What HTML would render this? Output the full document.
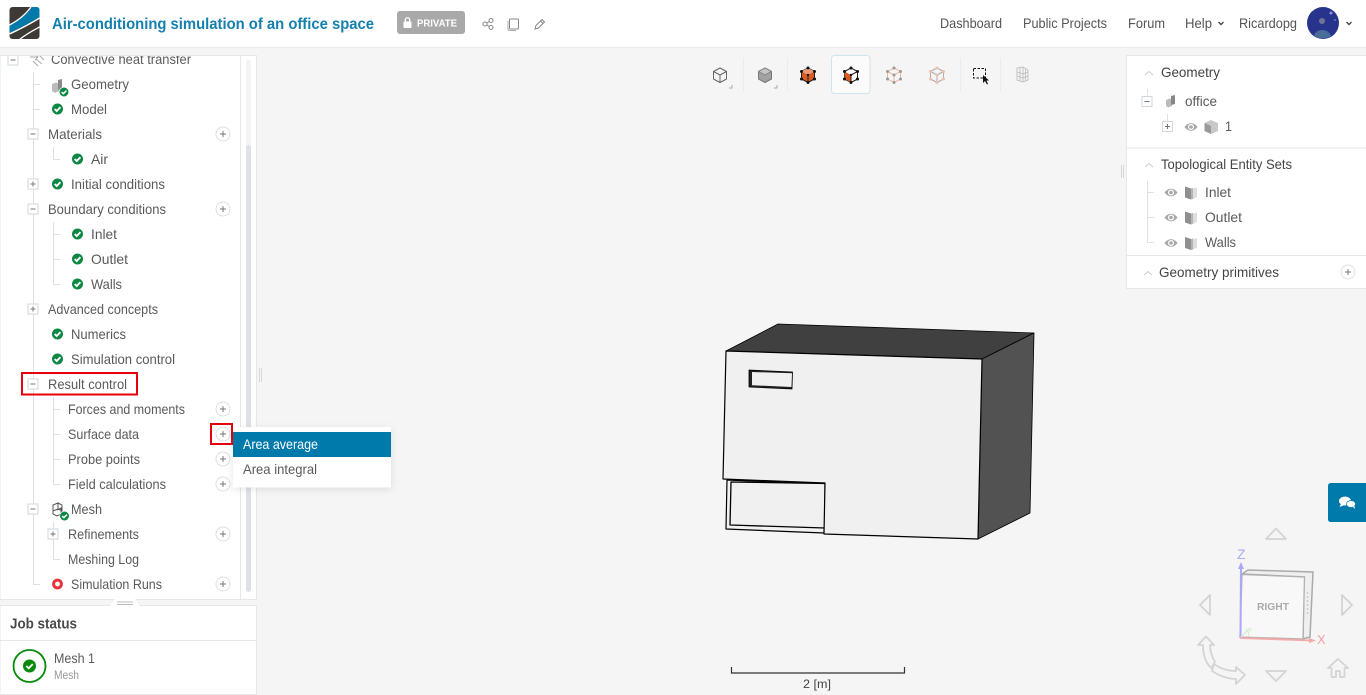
<!DOCTYPE html>
<html lang="en">
<head>
<meta charset="utf-8">
<title>Air-conditioning simulation of an office space</title>
<style>
html,body{margin:0;padding:0;width:1366px;height:695px;overflow:hidden;background:#f5f5f5}
svg{display:block;font-family:"Liberation Sans",sans-serif}
.t{font-size:14px;fill:#5a5a5a}
.n{font-size:14px;fill:#555}
.l{stroke:#e0e0e0;stroke-width:1;fill:none}
</style>
</head>
<body>
<svg width="1366" height="695" viewBox="0 0 1366 695" xmlns="http://www.w3.org/2000/svg">
<defs>
<g id="chk"><circle r="5.5" fill="#0d8744"/><path d="M-2.800 0L-0.800 2L2.900 -1.800" stroke="#fff" stroke-width="1.900" fill="none"/></g>
<g id="chks"><circle r="4.800" fill="#0d8744" stroke="#fff" stroke-width=".6"/><path d="M-2.400 0L-0.600 1.700L2.400 -1.400" stroke="#fff" stroke-width="1.500" fill="none"/></g>
<g id="pl"><circle r="7" fill="#fff" stroke="#dcdfe2" stroke-width="1"/><path d="M-3 0H3M0 -3V3" stroke="#777" stroke-width="1"/></g>
<g id="minus"><rect x="-5" y="-5" width="10" height="10" fill="#fff" stroke="#d2d7dc"/><path d="M-2.500 0H2.500" stroke="#777"/></g>
<g id="plus"><rect x="-5" y="-5" width="10" height="10" fill="#fff" stroke="#d2d7dc"/><path d="M-2.500 0H2.500M0 -2.500V2.500" stroke="#777"/></g>
<g id="eye"><path d="M-6.500 0C-3 -5 3 -5 6.500 0C3 5 -3 5 -6.500 0Z" fill="#a8a8a8"/><circle r="3" fill="#fff"/><circle r="1.800" fill="#a8a8a8"/></g>
<g id="face"><path d="M-6 -6L0 -4V7L-6 5Z" fill="#8f8f8f"/><path d="M0 -4L2 -4.500V6.500L0 7Z" fill="#b5b5b5"/><path d="M2 -4L6 -5V4.500L2 6.500Z" fill="#dedede"/></g>
<clipPath id="tree"><rect x="0" y="56" width="240" height="544"/></clipPath>
<clipPath id="logo"><rect x="9.500" y="7" width="30" height="32" rx="3"/></clipPath>
<filter id="sh" x="-10%" y="-20%" width="120%" height="150%"><feDropShadow dx="0" dy="2" stdDeviation="4" flood-color="#000" flood-opacity=".1"/></filter>
</defs>

<rect width="1366" height="695" fill="#f5f5f5"/>

<!-- header -->
<rect width="1366" height="47" fill="#fff"/>
<rect y="47" width="1366" height="1" fill="#e8e9ea"/>
<g clip-path="url(#logo)">
<rect x="9.500" y="7" width="30" height="32" fill="#3d3935"/>
<path d="M9.500 25C20 20 27 14 32 7H39.500V17C31 22 20 28 9.500 33Z" fill="#0079ab"/>
<path d="M9.500 25C19 20 26 14 31 7" stroke="#fff" stroke-width="1.300" fill="none"/>
<path d="M9.500 34C20 29 30 24 39.500 18" stroke="#fff" stroke-width="1.500" fill="none"/>
<path d="M19 40C26 34 32 31 39.500 27" stroke="#fff" stroke-width="1.300" fill="none"/>
</g>
<text x="52" y="29" textLength="322" lengthAdjust="spacingAndGlyphs" font-size="16" font-weight="bold" fill="#1580ae">Air-conditioning simulation of an office space</text>
<rect x="397" y="11" width="68" height="23" rx="3" fill="#a9a9a9"/>
<rect x="403.500" y="21.500" width="8" height="6.500" rx="1" fill="#fff"/>
<path d="M405.300 22V20C405.300 17 409.700 17 409.700 20V22" stroke="#fff" stroke-width="1.300" fill="none"/>
<text x="417" y="26.500" textLength="40" lengthAdjust="spacingAndGlyphs" font-size="10.500" font-weight="bold" fill="#fff">PRIVATE</text>
<g fill="none" stroke="#888" stroke-width="1">
<circle cx="485" cy="24" r="2"/><circle cx="491" cy="20.500" r="2"/><circle cx="491" cy="27.500" r="2"/>
<path d="M487 23L489.200 21.500M487 25L489.200 26.500"/>
<rect x="509.500" y="19" width="9" height="10" rx="1"/><path d="M508 21V29C508 30 509 30.500 510 30.500H516" stroke="#aaa"/>
<path d="M535 29L536 25.500L542 19.500L544.500 22L538.500 28Z"/><path d="M540.500 21L543 23.500"/>
</g>
<text class="n" x="940" y="28" textLength="62" lengthAdjust="spacingAndGlyphs">Dashboard</text>
<text class="n" x="1023" y="28" textLength="84" lengthAdjust="spacingAndGlyphs">Public Projects</text>
<text class="n" x="1128" y="28" textLength="37" lengthAdjust="spacingAndGlyphs">Forum</text>
<text class="n" x="1185" y="28" textLength="27" lengthAdjust="spacingAndGlyphs">Help</text>
<text class="n" x="1239" y="28" textLength="58" lengthAdjust="spacingAndGlyphs">Ricardopg</text>
<path d="M1218.500 22L1221 24.500L1223.500 22M1346.500 22L1349 24.500L1351.500 22" stroke="#444" stroke-width="1.400" fill="none"/>
<circle cx="1323" cy="23" r="16" fill="#28348c"/>
<circle cx="1331" cy="13" r="1.500" fill="#8a94dc"/>
<circle cx="1335" cy="20" r="1" fill="#6a74c4"/>
<circle cx="1322" cy="21" r="3" fill="#6f7399"/>
<path d="M1314 36C1315 28 1329 28 1331 36C1326 39 1319 39 1314 36Z" fill="#4a6c98"/>

<!-- left panel -->
<rect x="0" y="55.500" width="256.500" height="544" fill="#fff" stroke="#e6e7e8"/>
<rect x="240" y="56" width="1" height="544" fill="#e6e8ea"/>
<rect x="246" y="60" width="5" height="532" rx="2.500" fill="#f3f4f5"/>
<rect x="246" y="145" width="5" height="447" rx="2.500" fill="#dee2e6"/>

<g clip-path="url(#tree)">
<path class="l" d="M33.500 72V584.500H40M33.500 84.500H40M33.500 109.500H40M53.500 147V159.500H60M53.500 222V284.500H60M53.500 234.500H60M53.500 259.500H60M53.500 397V484.500H60M53.500 409.500H60M53.500 434.500H60M53.500 459.500H60M53.500 522V559.500H60"/>
<use href="#minus" x="13" y="60"/>
<use href="#minus" x="33" y="134"/>
<use href="#plus" x="33" y="184"/>
<use href="#minus" x="33" y="209"/>
<use href="#plus" x="33" y="309"/>
<use href="#minus" x="33" y="384"/>
<use href="#minus" x="33" y="509"/>
<use href="#plus" x="53" y="534"/>

<g stroke="#aaa" stroke-width="1" fill="none">
<path d="M30 57H38M35 54L38 57L35 60M42 64L36 59M38 66L33 61M44 60L39 55"/>
</g>
<path d="M52 84L56 82.500L59 84V91L55 93L52 91Z" fill="#bbb"/>
<path d="M58 80L62 79V89L58 90Z" fill="#8a8a8a"/>
<use href="#chks" x="64" y="92"/>
<g fill="none" stroke="#555" stroke-width="1">
<path d="M53 505L58 503V509L53 511ZM58 503L62 505V511L58 509ZM57 510L61 508V514L57 516L53 514V511"/>
</g>
<use href="#chks" x="64.500" y="516"/>
<use href="#chk" x="57.500" y="109"/>
<use href="#chk" x="77.500" y="159"/>
<use href="#chk" x="57.500" y="184"/>
<use href="#chk" x="77.500" y="234"/>
<use href="#chk" x="77.500" y="259"/>
<use href="#chk" x="77.500" y="284"/>
<use href="#chk" x="57.500" y="334"/>
<use href="#chk" x="57.500" y="359"/>
<circle cx="57.500" cy="584" r="3.900" fill="#fff" stroke="#e8323c" stroke-width="3"/>

<text class="t" x="51" y="64" textLength="140" lengthAdjust="spacingAndGlyphs">Convective heat transfer</text>
<text class="t" x="71" y="89" textLength="58" lengthAdjust="spacingAndGlyphs">Geometry</text>
<text class="t" x="71" y="114" textLength="36" lengthAdjust="spacingAndGlyphs">Model</text>
<text class="t" x="48" y="139" textLength="54" lengthAdjust="spacingAndGlyphs">Materials</text>
<text class="t" x="91" y="164" textLength="17" lengthAdjust="spacingAndGlyphs">Air</text>
<text class="t" x="71" y="189" textLength="94" lengthAdjust="spacingAndGlyphs">Initial conditions</text>
<text class="t" x="48" y="214" textLength="118" lengthAdjust="spacingAndGlyphs">Boundary conditions</text>
<text class="t" x="91" y="239" textLength="26" lengthAdjust="spacingAndGlyphs">Inlet</text>
<text class="t" x="91" y="264" textLength="37" lengthAdjust="spacingAndGlyphs">Outlet</text>
<text class="t" x="91" y="289" textLength="31" lengthAdjust="spacingAndGlyphs">Walls</text>
<text class="t" x="48" y="314" textLength="110" lengthAdjust="spacingAndGlyphs">Advanced concepts</text>
<text class="t" x="71" y="339" textLength="55" lengthAdjust="spacingAndGlyphs">Numerics</text>
<text class="t" x="71" y="364" textLength="104" lengthAdjust="spacingAndGlyphs">Simulation control</text>
<text class="t" x="48" y="389" textLength="79" lengthAdjust="spacingAndGlyphs">Result control</text>
<text class="t" x="68" y="414" textLength="117" lengthAdjust="spacingAndGlyphs">Forces and moments</text>
<text class="t" x="68" y="439" textLength="71" lengthAdjust="spacingAndGlyphs">Surface data</text>
<text class="t" x="68" y="464" textLength="72" lengthAdjust="spacingAndGlyphs">Probe points</text>
<text class="t" x="68" y="489" textLength="98" lengthAdjust="spacingAndGlyphs">Field calculations</text>
<text class="t" x="71" y="514" textLength="31" lengthAdjust="spacingAndGlyphs">Mesh</text>
<text class="t" x="68" y="539" textLength="71" lengthAdjust="spacingAndGlyphs">Refinements</text>
<text class="t" x="68" y="564" textLength="71" lengthAdjust="spacingAndGlyphs">Meshing Log</text>
<text class="t" x="71" y="589" textLength="91" lengthAdjust="spacingAndGlyphs">Simulation Runs</text>

<use href="#pl" x="223" y="134"/>
<use href="#pl" x="223" y="209"/>
<use href="#pl" x="223" y="409"/>
<use href="#pl" x="223" y="434"/>
<use href="#pl" x="223" y="459"/>
<use href="#pl" x="223" y="484"/>
<use href="#pl" x="223" y="534"/>
<use href="#pl" x="223" y="584"/>
</g>

<!-- red highlights -->
<rect x="22" y="373" width="115" height="21.500" fill="none" stroke="#e8000d" stroke-width="2"/>
<rect x="211" y="424" width="21" height="20" fill="none" stroke="#e8000d" stroke-width="2"/>

<!-- splitters -->
<path d="M259.500 368V382M261.500 368V382M1121.500 165V178M1123.500 165V178" stroke="#d8d8d8" stroke-width="1"/>

<!-- job status -->
<rect x="0" y="605.500" width="256.500" height="89" fill="#fff" stroke="#e6e7e8"/>
<path d="M110 606L115 599H135L140 606Z" fill="#fff"/>
<path d="M117 602H133M117 604.500H133" stroke="#bbb" stroke-width="1"/>
<rect x="0" y="640" width="256" height="1" fill="#e6e7e8"/>
<text x="10" y="628.500" textLength="67" lengthAdjust="spacingAndGlyphs" font-size="14.500" font-weight="bold" fill="#4a4a4a">Job status</text>
<circle cx="29.500" cy="666" r="16" fill="#fff" stroke="#0a8a0a" stroke-width="1.800"/>
<circle cx="29.500" cy="666" r="6.500" fill="#0a8a0a"/>
<path d="M26.300 666L28.700 668.300L32.800 664" stroke="#fff" stroke-width="1.800" fill="none"/>
<text class="t" x="54" y="663" textLength="41" lengthAdjust="spacingAndGlyphs">Mesh 1</text>
<text x="54" y="679" textLength="25" lengthAdjust="spacingAndGlyphs" font-size="11.500" fill="#999">Mesh</text>

<!-- dropdown -->
<rect x="233" y="427" width="158" height="60.500" fill="#fff" filter="url(#sh)"/>
<rect x="233" y="432" width="158" height="25" fill="#0079ab"/>
<text x="243" y="449" textLength="75" lengthAdjust="spacingAndGlyphs" font-size="14" fill="#fff">Area average</text>
<text class="t" x="243" y="474" textLength="74" lengthAdjust="spacingAndGlyphs">Area integral</text>

<!-- toolbar -->
<rect x="831.500" y="55.500" width="38.500" height="38" rx="3" fill="#fbfbfb" stroke="#cfe4ee"/>
<path d="M743.500 58V92M787.500 58V92M960.500 58V92M1000.500 58V92" stroke="#ececec"/>
<g stroke-width="1" stroke-linejoin="round">
<g fill="none" stroke="#666"><path d="M720 68L726.500 71.500V79L720 82.500L713.500 79V71.500Z"/><path d="M713.500 71.500L720 75L726.500 71.500M720 75V82.500"/></g>
<path d="M729 88H732V85" fill="none" stroke="#aaa"/>
<path d="M765 68L771.500 71.500V79L765 82.500L758.500 79V71.500Z" fill="#a2a2a2" stroke="#777"/>
<path d="M758.500 71.500L765 75L771.500 71.500L765 68Z" fill="#c5c5c5" stroke="#888"/>
<path d="M774 88H777V85" fill="none" stroke="#aaa"/>
<path d="M808 68L814.500 71.500V79L808 82.500L801.500 79V71.500Z" fill="#d95b20" stroke="#222"/>
<path d="M801.500 71.500L808 75L814.500 71.500L808 68Z" fill="#ee9a75" stroke="none"/>
<path d="M808 75V82.500" stroke="#222"/>
<g fill="#111"><circle cx="808" cy="68" r="1.500"/><circle cx="814.500" cy="71.500" r="1.500"/><circle cx="814.500" cy="79" r="1.500"/><circle cx="808" cy="82.500" r="1.500"/><circle cx="801.500" cy="79" r="1.500"/><circle cx="801.500" cy="71.500" r="1.500"/><circle cx="808" cy="75" r="1.200"/></g>
<path d="M851 68L857.500 71.500V79L851 82.500L844.500 79V71.500Z" fill="#fff" stroke="#222"/>
<path d="M844.500 71.500L851 75V82.500L844.500 79Z" fill="#d95b20"/>
<path d="M851 75L857.500 71.500M851 75V82.500" stroke="#222"/>
<g fill="#111"><circle cx="851" cy="68" r="1.500"/><circle cx="857.500" cy="71.500" r="1.500"/><circle cx="857.500" cy="79" r="1.500"/><circle cx="851" cy="82.500" r="1.500"/><circle cx="844.500" cy="79" r="1.500"/><circle cx="844.500" cy="71.500" r="1.500"/><circle cx="851" cy="75" r="1.200"/></g>
<g fill="none" stroke="#f0b89e"><path d="M894 68L900.500 71.500V79L894 82.500L887.500 79V71.500Z"/><path d="M887.500 71.500L894 75L900.500 71.500M894 75V82.500"/></g>
<g fill="#999"><circle cx="894" cy="68" r="1.500"/><circle cx="900.500" cy="71.500" r="1.500"/><circle cx="900.500" cy="79" r="1.500"/><circle cx="894" cy="82.500" r="1.500"/><circle cx="887.500" cy="79" r="1.500"/><circle cx="887.500" cy="71.500" r="1.500"/><circle cx="894" cy="75" r="1.500"/></g>
<g fill="none" stroke="#aaa"><path d="M937 68L943.500 71.500V79L937 82.500L930.500 79V71.500Z"/><path d="M930.500 71.500L937 75L943.500 71.500M937 75V82.500"/></g>
<g fill="#f3bea6"><circle cx="937" cy="68" r="1.500"/><circle cx="943.500" cy="71.500" r="1.500"/><circle cx="943.500" cy="79" r="1.500"/><circle cx="937" cy="82.500" r="1.500"/><circle cx="930.500" cy="79" r="1.500"/><circle cx="930.500" cy="71.500" r="1.500"/><circle cx="937" cy="75" r="1.500"/></g>
<rect x="973.500" y="68.500" width="12" height="9.500" fill="none" stroke="#111" stroke-dasharray="2.500 1.500"/>
<path d="M983 75V83L985 81L987 84.500L988 84L986.500 80.500H989Z" fill="#111" stroke="none"/>
<g fill="none" stroke="#c4c4c4"><path d="M1017 68L1023 67L1028 70V80L1023 82L1017 80Z"/><path d="M1017 72L1023 74L1028 72M1017 76L1023 78L1028 76M1020 68V81M1023 67V82M1025.500 69V81"/></g>
</g>

<!-- 3D geometry -->
<g stroke="#000" stroke-linejoin="round">
<path d="M778 324L1034 333L982 359L726 351Z" fill="#404040" stroke-width=".8"/>
<path d="M982 359L1034 333L1030 513L978 539Z" fill="#525252" stroke-width=".8"/>
<path d="M727 480L726 529L824 533L825 484Z" fill="#f2f2f2" stroke-width="1.200"/>
<path d="M731 482L825 483.500L825 528L730 525Z" fill="#f0f0f0" stroke-width="1.300"/>
<path d="M726 351L982 359L978 539L824 534L825 483L723 479Z" fill="#f0f0f0" stroke-width="1.200"/>
<path d="M749 370L792.500 372L792 389L749 387Z" fill="#222" stroke-width=".8"/>
<path d="M752 372L792 373.200L791.500 387L752 385.200Z" fill="#f0f0f0" stroke="none"/>
</g>

<!-- scale -->
<path d="M731.500 667V673H904.500V667" fill="none" stroke="#333" stroke-width="1.200"/>
<text x="803" y="688" textLength="28" lengthAdjust="spacingAndGlyphs" font-size="12" fill="#444">2 [m]</text>

<!-- right panel -->
<rect x="1126.500" y="55.500" width="241" height="233" fill="#fff" stroke="#e6e7e8"/>
<rect x="1127" y="147.500" width="239" height="1" fill="#e6e7e8"/>
<rect x="1127" y="255" width="239" height="1" fill="#e6e7e8"/>
<path d="M1145 75L1149 71.500L1153 75M1145 167L1149 163.500L1153 167M1144 275L1148 271.500L1152 275" fill="none" stroke="#ccc"/>
<path class="l" d="M1147.500 89V96M1167.500 114V121M1147.500 181V242.500H1154M1147.500 192.500H1154M1147.500 217.500H1154"/>
<use href="#minus" x="1147" y="101.500"/>
<use href="#plus" x="1167.500" y="126.500"/>
<text x="1161" y="77" textLength="59" lengthAdjust="spacingAndGlyphs" font-size="14" fill="#444">Geometry</text>
<text x="1161" y="169" textLength="131" lengthAdjust="spacingAndGlyphs" font-size="14" fill="#444">Topological Entity Sets</text>
<text x="1159" y="277" textLength="120" lengthAdjust="spacingAndGlyphs" font-size="14" fill="#444">Geometry primitives</text>
<text class="t" x="1185" y="106" textLength="32" lengthAdjust="spacingAndGlyphs">office</text>
<text class="t" x="1225" y="131" textLength="7" lengthAdjust="spacingAndGlyphs">1</text>
<text class="t" x="1205" y="197" textLength="26" lengthAdjust="spacingAndGlyphs">Inlet</text>
<text class="t" x="1205" y="222" textLength="37" lengthAdjust="spacingAndGlyphs">Outlet</text>
<text class="t" x="1205" y="247" textLength="31" lengthAdjust="spacingAndGlyphs">Walls</text>
<path d="M1166 100L1170 98.500L1172 100V106L1168 107.500L1166 106Z" fill="#bbb"/>
<path d="M1171 96L1175 95V104L1171 105Z" fill="#888"/>
<use href="#eye" x="1191" y="127"/>
<path d="M1211 120L1218 123V131L1211 134L1204.500 131V123Z" fill="#c8c8c8"/>
<path d="M1204.500 123L1211 126V134L1204.500 131Z" fill="#9a9a9a"/>
<use href="#eye" x="1171" y="192.500"/>
<use href="#face" x="1191" y="192.500"/>
<use href="#eye" x="1171" y="217.500"/>
<use href="#face" x="1191" y="217.500"/>
<use href="#eye" x="1171" y="243"/>
<use href="#face" x="1191" y="243"/>
<use href="#pl" x="1348" y="272"/>

<!-- chat -->
<path d="M1366 483H1331Q1328 483 1328 486V519Q1328 522 1331 522H1366Z" fill="#0079ab"/>
<ellipse cx="1345" cy="501" rx="6" ry="4.500" fill="#fff"/>
<path d="M1341 504L1339.500 507L1344.500 505Z" fill="#fff"/>
<ellipse cx="1351" cy="504" rx="4.500" ry="3.500" fill="#fff" stroke="#0079ab" stroke-width=".7"/>
<path d="M1353 507L1355 509L1354.500 506Z" fill="#fff"/>

<!-- nav cube -->
<g fill="none" stroke="#d4d4d4" stroke-width="1.800" stroke-linejoin="round">
<path d="M1276 528.500L1266 539H1286Z"/>
<path d="M1266 671H1286L1276 681Z"/>
<path d="M1210 595V615L1200 605Z"/>
<path d="M1342 595V615L1352 605Z"/>
<path d="M1338 659L1328 668H1331.500V677H1336V671H1340V677H1344.500V668H1348Z"/>
<path d="M1206 636.500L1198 645H1203C1203 654 1205 662 1211 668L1215 662C1212 657 1210 652 1210 645H1214Z"/>
<path d="M1214 664L1212 671C1220 676 1228 679 1236 679V684L1245 675L1236 667V671C1228 671 1221 669 1214 664Z"/>
</g>
<path d="M1248 570L1313 572L1310 637L1303 639L1304 577L1242 574Z" fill="#efefef" stroke="#aaa" stroke-width="1.500"/>
<path d="M1242 574.500L1304.500 577L1303 639L1240 637Z" fill="#f8f8f8" stroke="#b0b0b0" stroke-width="1.300"/>
<path d="M1307.500 592V615" stroke="#ccc" stroke-width="1.500" stroke-dasharray="2 2"/>
<text x="1257" y="610" textLength="32" lengthAdjust="spacingAndGlyphs" font-size="10" font-weight="bold" fill="#aaa">RIGHT</text>
<path d="M1240.500 638L1241 566" stroke="#a9a9f5" stroke-width="2"/>
<path d="M1241 562L1238 569H1244Z" fill="#a9a9f5"/>
<path d="M1240 638L1312 640.500" stroke="#f5a9a9" stroke-width="1.800"/>
<path d="M1316 640.500L1309 638V643Z" fill="#f5a9a9"/>
<path d="M1241 637L1250 628" stroke="#d5eed5" stroke-width="1.500"/>
<text x="1237" y="559" font-size="14" fill="#a9a9f5">Z</text>
<text x="1317" y="644" font-size="13" fill="#f5a0a0">X</text>
<text x="1245" y="636" font-size="11" fill="#d5eed5">Y</text>
</svg>
</body>
</html>
